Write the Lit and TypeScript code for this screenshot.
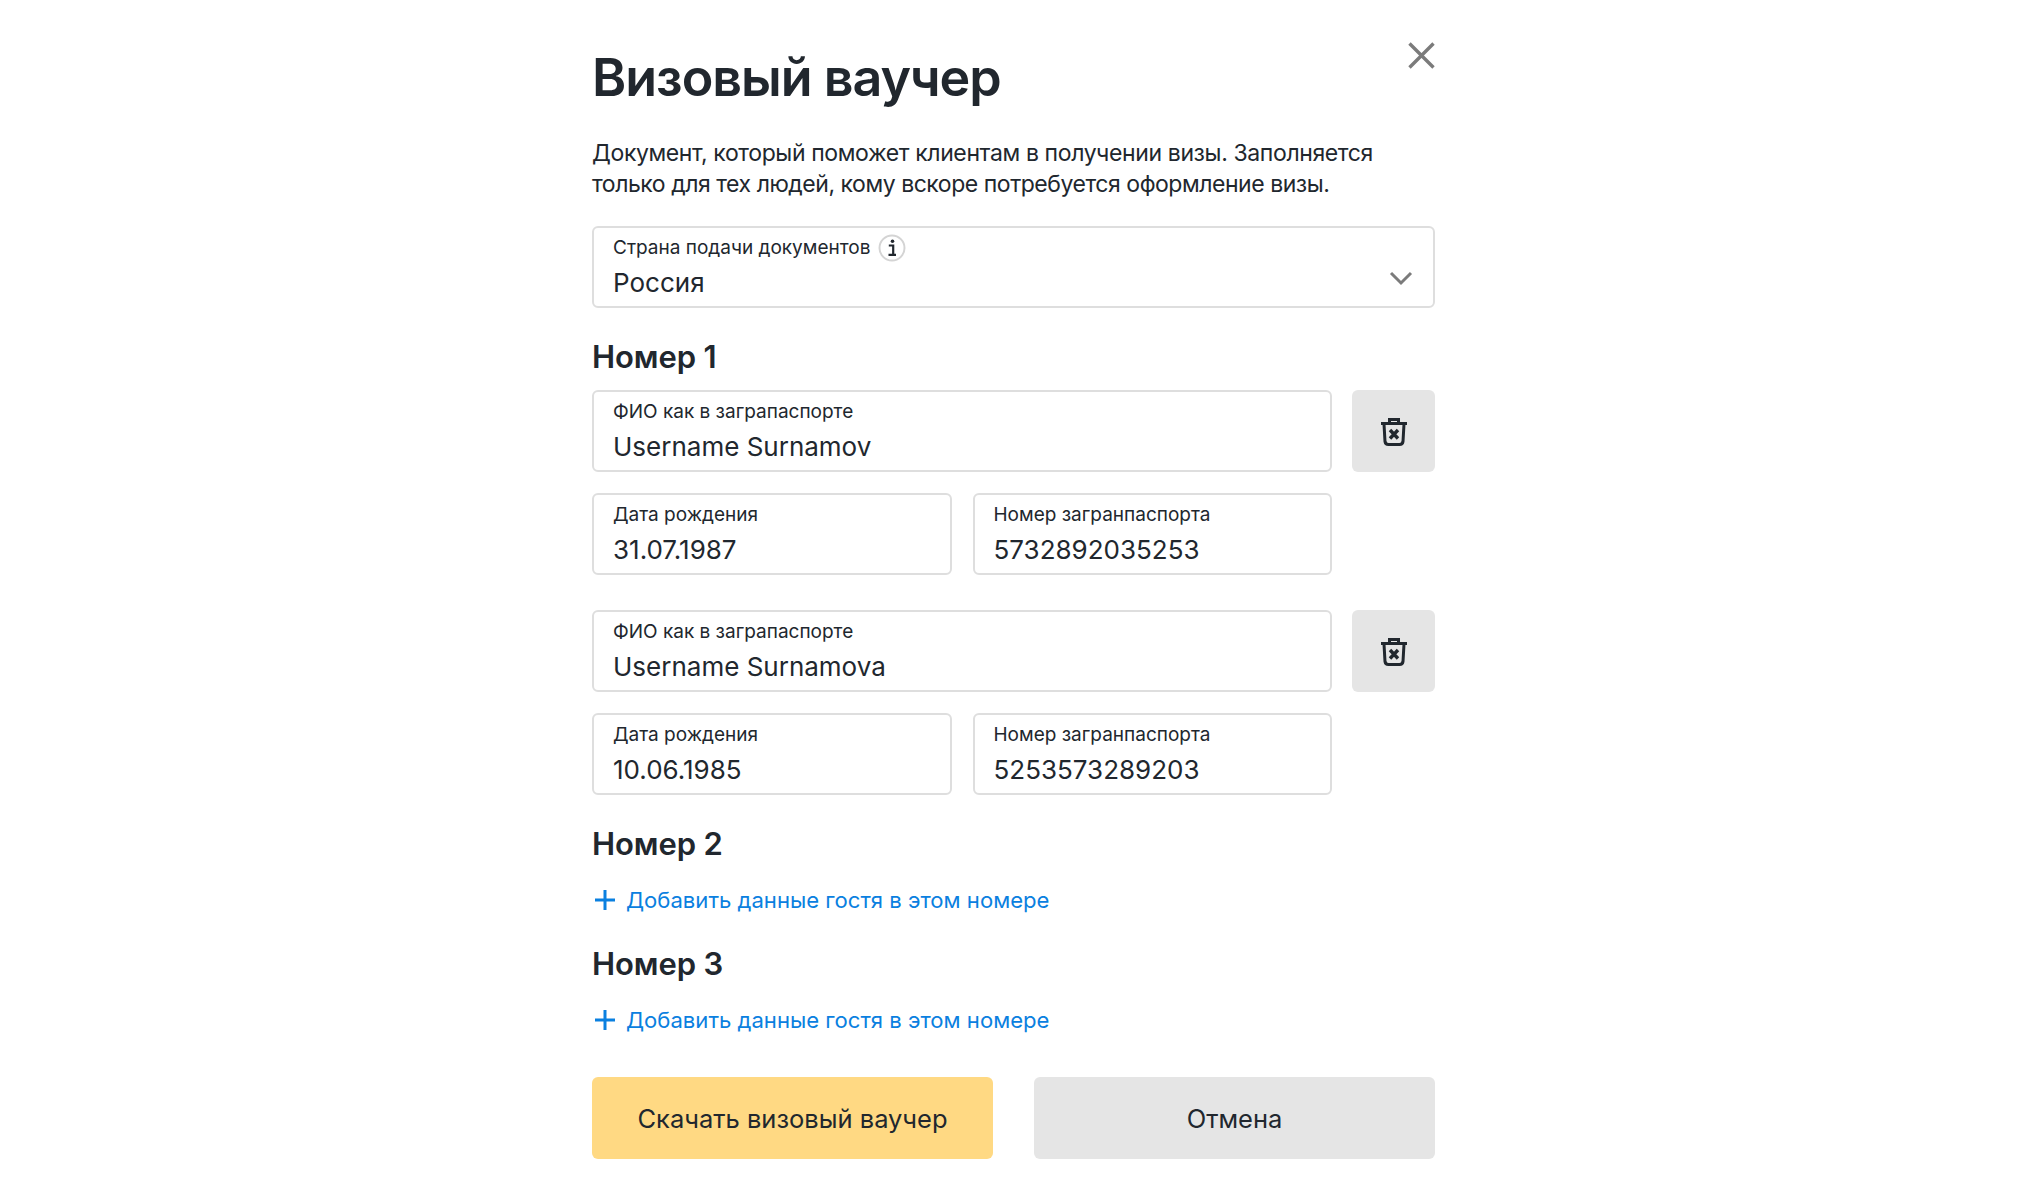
import { LitElement, html, css, svg } from 'lit';
import { customElement, property } from 'lit/decorators.js';

const trashIcon = svg`
  <path d="M1 6.500h26M9.500 6V2.500h9V6" fill="none" stroke="#21272e" stroke-width="3"/>
  <path d="M4 7l1 17.500a3.500 3.500 0 0 0 3.500 3h11a3.500 3.500 0 0 0 3.500-3L24 7" fill="none" stroke="#21272e" stroke-width="3"/>
  <path d="M10 13l8 8.500M18 13l-8 8.500" fill="none" stroke="#21272e" stroke-width="3.400"/>
`;

@customElement('voucher-field')
export class VoucherField extends LitElement {
  static override styles = css`
    :host {
      display: block;
      flex: 1 1 0;
      min-width: 0;
    }

    .field {
      position: relative;
      box-sizing: border-box;
      height: 82px;
      padding: 7px 19px 0;
      border: 2px solid #dedede;
      border-radius: 6px;
      background: #fff;
    }

    .label {
      display: flex;
      align-items: center;
      gap: 8px;
      height: 25px;
      font-size: 19px;
      color: #21272e;
    }

    .value {
      margin-top: 6px;
      font-size: 26px;
      line-height: 34px;
      color: #21272e;
    }

    .info {
      display: block;
      flex: none;
    }

    .chevron {
      position: absolute;
      right: 20px;
      top: 42px;
    }
  `;

  @property({ type: String }) label = '';
  @property({ type: String }) value = '';
  @property({ type: Boolean }) info = false;
  @property({ type: Boolean }) select = false;

  override render() {
    return html`
      <div class="field">
        <div class="label">
          ${this.label}
          ${this.info
            ? html`<svg class="info" width="28" height="28" viewBox="0 0 28 28">
                <circle cx="14" cy="14" r="12.500" fill="#fff" stroke="#d4d4d4" stroke-width="2"/>
                <path d="M10.800 11.500h4.400v9M10.500 20.800h7.500" fill="none" stroke="#21272e" stroke-width="2.200"/>
                <circle cx="14.500" cy="7.300" r="1.800" fill="#21272e"/>
              </svg>`
            : ''}
        </div>
        <div class="value">${this.value}</div>
        ${this.select
          ? html`<svg class="chevron" width="24" height="16" viewBox="0 0 24 16">
              <path d="M2 3l10 10L22 3" fill="none" stroke="#7b7b7b" stroke-width="3"/>
            </svg>`
          : ''}
      </div>
    `;
  }
}

@customElement('app-root')
export class AppRoot extends LitElement {
  static override styles = css`
    :host {
      display: block;
      min-height: 1200px;
      background: #fff;
      font-family: Inter, 'Noto Sans', sans-serif;
      color: #21272e;
    }

    .modal {
      position: relative;
      box-sizing: border-box;
      width: 843px;
      margin-left: 592px;
      padding-top: 46px;
    }

    .close {
      position: absolute;
      right: 0;
      top: 41px;
      display: block;
    }

    h1 {
      margin: 0;
      font-size: 52px;
      line-height: 64px;
      font-weight: 600;
      letter-spacing: -1px;
    }

    .desc {
      margin: 28px 0 26px;
      font-size: 23px;
      line-height: 31px;
      letter-spacing: -0.38px;
    }

    .desc-tight {
      letter-spacing: -0.46px;
    }

    h2 {
      margin: 0;
      font-size: 31px;
      line-height: 40px;
      font-weight: 600;
      letter-spacing: -0.1px;
    }

    .room-title {
      margin-top: 29px;
      margin-bottom: 13px;
    }

    .guest {
      display: grid;
      grid-template-columns: 1fr 83px;
      column-gap: 20px;
      row-gap: 21px;
    }

    .guest + .guest {
      margin-top: 35px;
    }

    .pair {
      display: flex;
      gap: 21px;
    }

    .delete {
      display: flex;
      align-items: center;
      justify-content: center;
      height: 82px;
      border-radius: 6px;
      background: #e5e5e5;
    }

    .delete svg {
      display: block;
      margin-top: 2px;
    }

    .add {
      display: flex;
      align-items: center;
      gap: 9px;
      margin-top: 21px;
      font-size: 22.100px;
      line-height: 30px;
      color: #0a80e0;
    }

    .add svg {
      display: block;
      margin-left: 1px;
    }

    .add + h2 {
      margin-top: 29px;
    }

    .room-title--empty {
      margin-top: 29px;
    }

    .actions {
      display: flex;
      gap: 41px;
      margin-top: 42px;
    }

    .btn {
      flex: 1 1 0;
      height: 82px;
      display: flex;
      align-items: center;
      justify-content: center;
      border-radius: 6px;
      font-size: 25.500px;
      background: #e5e5e5;
    }

    .btn--primary {
      background: #ffd983;
    }
  `;

  private guests = [
    { name: 'Username Surnamov', birth: '31.07.1987', passport: '5732892035253' },
    { name: 'Username Surnamova', birth: '10.06.1985', passport: '5253573289203' },
  ];

  private renderAdd() {
    return html`
      <div class="add">
        <svg width="24" height="24" viewBox="0 0 24 24">
          <path d="M12 2v20M2 12h20" fill="none" stroke="#0a80e0" stroke-width="3"/>
        </svg>
        Добавить данные гостя в этом номере
      </div>
    `;
  }

  override render() {
    return html`
      <div class="modal">
        <svg class="close" width="28" height="28" viewBox="0 0 28 28">
          <path d="M2.500 2.500l24 24M26.500 2.500l-24 24" fill="none" stroke="#7b7b7b" stroke-width="3.400"/>
        </svg>
        <h1>Визовый ваучер</h1>
        <p class="desc">
          Документ, который поможет клиентам в получении визы. Заполняется<br />
          <span class="desc-tight">только для тех людей, кому вскоре потребуется оформление визы.</span>
        </p>
        <voucher-field label="Страна подачи документов" value="Россия" info select></voucher-field>

        <h2 class="room-title">Номер 1</h2>
        ${this.guests.map(
          (g) => html`
            <div class="guest">
              <voucher-field label="ФИО как в заграпаспорте" .value=${g.name}></voucher-field>
              <div class="delete">
                <svg width="28" height="30" viewBox="0 0 28 30">${trashIcon}</svg>
              </div>
              <div class="pair">
                <voucher-field label="Дата рождения" .value=${g.birth}></voucher-field>
                <voucher-field label="Номер загранпаспорта" .value=${g.passport}></voucher-field>
              </div>
            </div>
          `
        )}

        <h2 class="room-title--empty">Номер 2</h2>
        ${this.renderAdd()}
        <h2>Номер 3</h2>
        ${this.renderAdd()}

        <div class="actions">
          <div class="btn btn--primary">Скачать визовый ваучер</div>
          <div class="btn">Отмена</div>
        </div>
      </div>
    `;
  }
}
